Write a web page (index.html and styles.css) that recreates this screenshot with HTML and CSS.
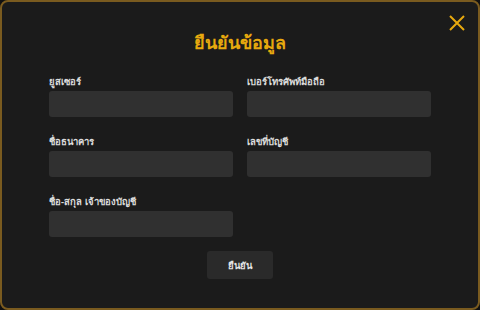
FILE: index.html
```html
<!DOCTYPE html>
<html lang="th">

<head>
  <meta charset="UTF-8">
  <title>ยืนยันข้อมูล</title>
  <link rel="stylesheet" href="styles.css">
</head>

<body>

  <div class="modal">
    <button class="close" aria-label="close">
      <svg width="18" height="18" viewBox="0 0 18 18">
        <path d="M2 2 L16 16 M16 2 L2 16" stroke="#e7a90e" stroke-width="2" fill="none" />
      </svg>
    </button>

    <h1 class="title">ยืนยันข้อมูล</h1>

    <form class="form">
      <div class="field">
        <label for="user">ยูสเซอร์</label>
        <input type="text" id="user">
      </div>
      <div class="field">
        <label for="phone">เบอร์โทรศัพท์มือถือ</label>
        <input type="text" id="phone">
      </div>
      <div class="field">
        <label for="bank">ชื่อธนาคาร</label>
        <input type="text" id="bank">
      </div>
      <div class="field">
        <label for="account">เลขที่บัญชี</label>
        <input type="text" id="account">
      </div>
      <div class="field">
        <label for="owner">ชื่อ-สกุล เจ้าของบัญชี</label>
        <input type="text" id="owner">
      </div>
    </form>

    <div class="actions">
      <button class="confirm">ยืนยัน</button>
    </div>
  </div>

</body>

</html>
```
FILE: styles.css
```css
html {
  box-sizing: border-box;
}

*,
*:before,
*:after {
  box-sizing: inherit;
}

body {
  margin: 0;
  width: 480px;
  height: 310px;
  background: #111;
  font-family: "Noto Sans", "DejaVu Sans", sans-serif;
}

.modal {
  position: relative;
  width: 480px;
  height: 310px;
  background: #1b1b1b;
  border: 2px solid #7a5b1f;
  border-radius: 8px;
  padding: 23px 47px 0;
}

.close {
  position: absolute;
  top: 12px;
  right: 12px;
  background: none;
  border: 0;
  padding: 0;
  width: 18px;
  height: 18px;
  cursor: pointer;
}

.title {
  margin: 0;
  text-align: center;
  color: #e7a90e;
  font-size: 18px;
  font-weight: 600;
  line-height: 34px;
}

.form {
  display: grid;
  grid-template-columns: 184px 184px;
  column-gap: 14px;
  row-gap: 14px;
  margin-top: 12px;
}

.field label {
  display: block;
  color: #dcdcdc;
  font-size: 9.5px;
  font-weight: bold;
  line-height: 16px;
  padding-top: 3px;
  margin-bottom: 1px;
}

.field input {
  display: block;
  width: 100%;
  height: 26px;
  background: #303030;
  border: 0;
  border-radius: 3px;
  color: #fff;
  outline: none;
}

.actions {
  display: flex;
  justify-content: center;
  margin-top: 14px;
}

.confirm {
  width: 66px;
  height: 28px;
  background: #2a2a2a;
  border: 0;
  border-radius: 3px;
  color: #e5e5e5;
  font-family: inherit;
  font-size: 9.5px;
  font-weight: bold;
}
```
